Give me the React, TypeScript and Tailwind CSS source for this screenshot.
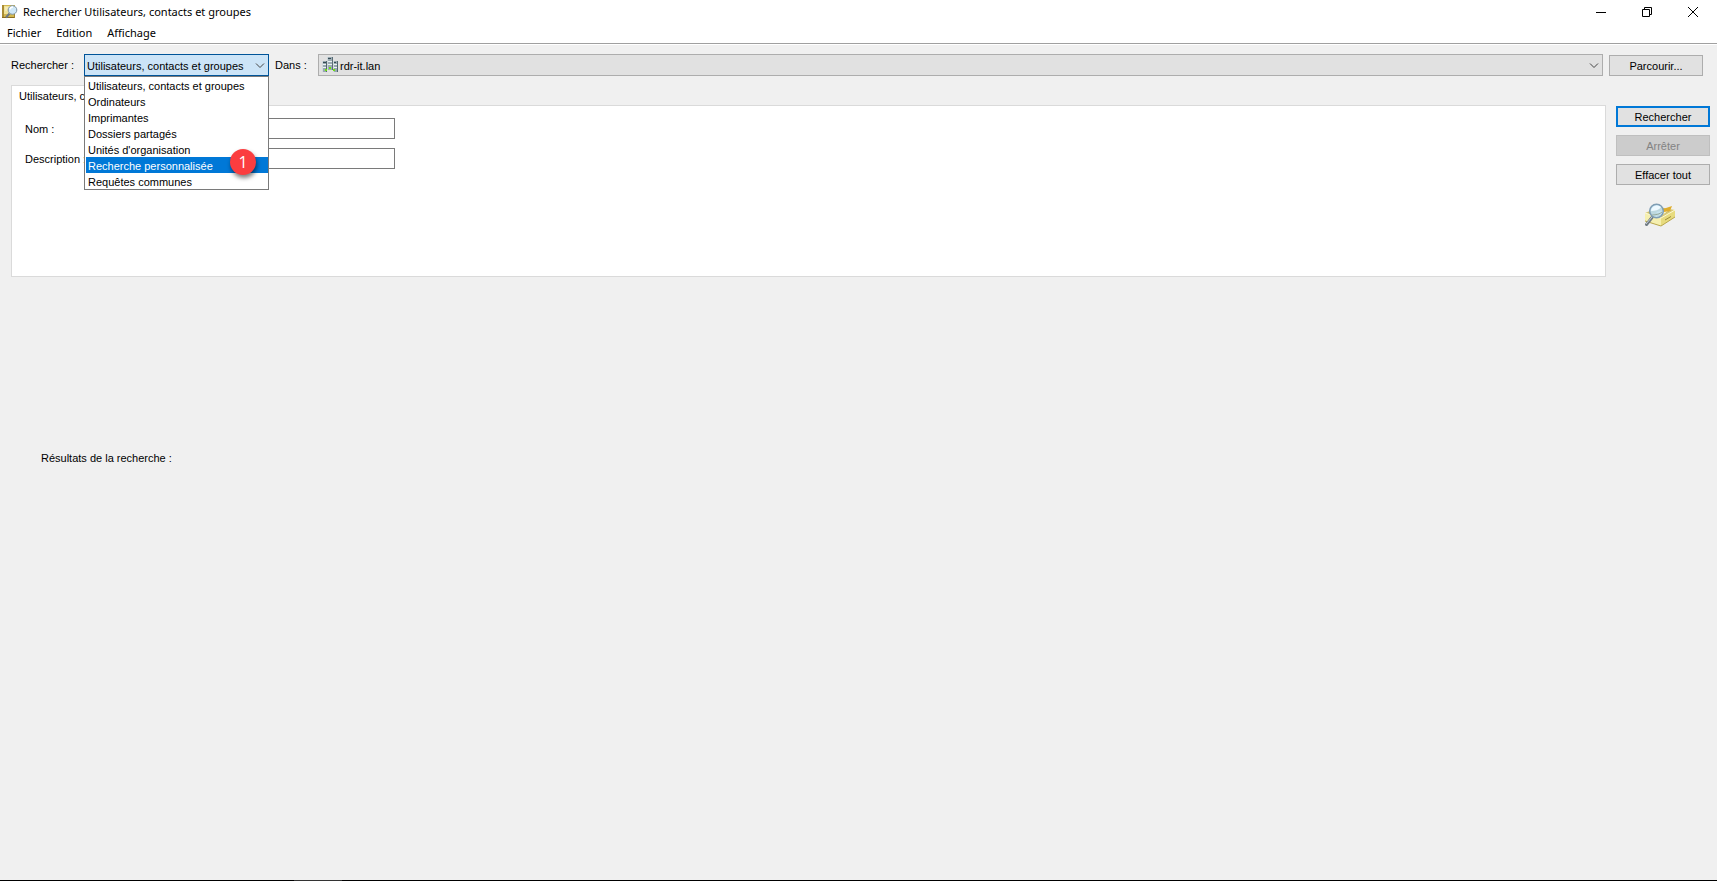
import { useState } from "react";

const MENUS = ["Fichier", "Edition", "Affichage"];

const SEARCH_TYPES = [
  "Utilisateurs, contacts et groupes",
  "Ordinateurs",
  "Imprimantes",
  "Dossiers partagés",
  "Unités d'organisation",
  "Recherche personnalisée",
  "Requêtes communes",
];

function AppIcon() {
  return (
    <svg width="16" height="16" viewBox="0 0 16 16" aria-hidden="true">
      <path d="M0 1h13v13H0z" fill="#d3b84f" />
      <path d="M0 1h2v13H0z" fill="#a98c35" />
      <path d="M2 2h10v8H2z" fill="#efe197" />
      <path d="M0 13h13v1H0z" fill="#8a6c20" />
      <path d="M12 10h1v4h-1z" fill="#a08434" />
      <path d="M3 4h4M3 6h2" stroke="#fbf6cf" />
      <path d="M7.500 9.500 4 13.500" stroke="#6f7a84" strokeWidth="2" />
      <circle cx="10.500" cy="6" r="4.300" fill="#cfe8f8" stroke="#8095a5" />
      <path d="M8 5.500a3 3 0 0 1 3-2.500" stroke="#fff" strokeWidth="1.500" fill="none" />
    </svg>
  );
}

function DomainIcon() {
  return (
    <svg width="16" height="16" viewBox="0 0 16 16" aria-hidden="true">
      <path d="M5 0h6v13H5z" fill="#9babb3" />
      <path d="M5 0h1v13H5z" fill="#cbd6da" />
      <path d="M10 0h1v13h-1z" fill="#5c6e77" />
      <path d="M6 4.500h4M6 7.500h4" stroke="#e9f0f2" />
      <path d="M6 1h3v1H6z" fill="#364a54" />
      <path d="M0 4h5v11H0zM11 4h5v11h-5z" fill="#97a8b0" />
      <path d="M0 4h1v11H0zM11 4h1v11h-1z" fill="#d0dade" />
      <path d="M4 4h1v11H4zM15 4h1v11h-1z" fill="#54666f" />
      <path d="M1 7.500h3M1 10.500h3M12 7.500h3M12 10.500h3" stroke="#edf3f5" />
      <path d="M1 5h3v1H1zM12 5h2v1h-2z" fill="#364a54" />
      <path d="M3 12h2v2H3zM7 10h2v2H7zM11 12h2v2h-2z" fill="#6fe00f" />
    </svg>
  );
}

function SearchBoxIcon() {
  return (
    <svg width="32" height="24" viewBox="0 0 32 24" aria-hidden="true">
      <path d="m1 10 14-6 16 3-14 9z" fill="#d9ca76" />
      <path d="m4 10 12-5 11 2-11 6z" fill="#a8984a" />
      <path d="m12 9 15-3-10 7z" fill="#fbf6cf" />
      <path d="m19 6 9-3-2 5-6 1z" fill="#e0ad2c" />
      <path d="m1 10 16 5v8L1 18z" fill="#f5efb0" />
      <path d="m17 15 14-8v7l-14 9z" fill="#e7db7e" />
      <path d="m1 18 16 5 14-9" stroke="#b9a74b" fill="none" />
      <path d="m1 10 16 5 14-8" stroke="#fdf9d4" fill="none" />
      <path d="m21 17 6-3.500" stroke="#9e8c37" />
      <path d="M8 14.500 2.500 21.500" stroke="#6f7a82" strokeWidth="3" strokeLinecap="round" />
      <path d="m8 14-6 7" stroke="#c8d0d5" />
      <circle cx="12.500" cy="8" r="6.800" fill="#bfe0f4" fillOpacity=".88" stroke="#7f9db3" strokeWidth="1.500" />
      <path d="M7 8a6 6 0 0 1 10-4c-2 3-6 4-10 4z" fill="#eef9ff" />
      <path d="M8 12c4 0 8-1 10-3" stroke="#96a99a" fill="none" />
    </svg>
  );
}

function Chevron() {
  return (
    <svg className="pointer-events-none absolute top-[9px] right-1" width="10" height="6" viewBox="0 0 10 6" fill="none" stroke="#444" aria-hidden="true">
      <path d="m1 .5 4 4 4-4" />
    </svg>
  );
}

function WindowControls() {
  return (
    <div className="flex">
      <button aria-label="Réduire" className="flex h-[22px] w-[46px] items-center justify-center">
        <svg width="10" height="10" viewBox="0 0 10 10" stroke="#000"><path d="M0 5.500h10" /></svg>
      </button>
      <button aria-label="Restaurer" className="flex h-[22px] w-[46px] items-center justify-center">
        <svg width="10" height="10" viewBox="0 0 10 10" fill="none" stroke="#000">
          <path d="M.5 2.500h7v7h-7zM2.500 2.500v-2h7v7h-2" />
        </svg>
      </button>
      <button aria-label="Fermer" className="flex h-[22px] w-[46px] items-center justify-center">
        <svg width="10" height="10" viewBox="0 0 10 10" stroke="#000"><path d="m0 0 10 10M10 0 0 10" /></svg>
      </button>
    </div>
  );
}

const buttonBase = "h-[21px] w-[94px] shrink-0 bg-[#e1e1e1] text-center leading-4";

export default function App() {
  const [searchType, setSearchType] = useState(SEARCH_TYPES[0]);
  const [highlighted, setHighlighted] = useState(SEARCH_TYPES[5]);

  return (
    <div className="flex min-h-screen flex-col bg-[#f0f0f0] font-['Liberation_Sans',Arial,sans-serif] text-[11px] text-black">
      <header className="border-b border-white bg-white font-['Noto_Sans','Open_Sans',sans-serif]">
        <div className="flex h-[23px] items-center justify-between pr-px">
          <div className="flex items-center gap-[5px] pl-[2px]">
            <AppIcon />
            <h1 className="pt-px text-[11px]">Rechercher Utilisateurs, contacts et groupes</h1>
          </div>
          <WindowControls />
        </div>
        <nav className="flex h-[21px] gap-[15px] border-b border-[#a0a0a0] pl-[7px]">
          {MENUS.map((menu) => (
            <button key={menu} className="text-[11px] leading-5">{menu}</button>
          ))}
        </nav>
      </header>

      <main className="flex-1">
        {/* Search scope */}
        <div className="flex h-10 items-start pt-[9px] pr-[14px] pl-[11px]">
          <label htmlFor="search-type" className="w-[73px] shrink-0 leading-[22px]">Rechercher :</label>
          <div className="relative w-[185px] shrink-0">
            <select
              id="search-type"
              value={searchType}
              onChange={(e) => setSearchType(e.target.value)}
              className="block h-[22px] w-full appearance-none border border-[#005499] bg-[#cce4f7] pt-[2px] pl-[2px] outline-none"
            >
              {SEARCH_TYPES.map((type) => (
                <option key={type}>{type}</option>
              ))}
            </select>
            <Chevron />
            <div role="listbox" aria-label="Rechercher" className="absolute top-full left-0 z-10 w-full border border-[#7a7a7a] bg-white pl-px">
              {SEARCH_TYPES.map((type) => (
                <button
                  key={type}
                  role="option"
                  aria-selected={type === highlighted}
                  onMouseEnter={() => setHighlighted(type)}
                  onClick={() => setSearchType(type)}
                  className={`block h-4 w-full pt-px pl-[2px] text-left leading-4 ${
                    type === highlighted ? "bg-[#0078d7] text-white" : ""
                  }`}
                >
                  {type}
                </button>
              ))}
              <span className="absolute top-[72px] left-[145px] flex size-[26px] items-center justify-center rounded-full bg-[#fb3d3f] font-['Open_Sans',sans-serif] text-base text-white shadow-[1px_3px_4px_rgba(0,0,0,0.5)]">
                1
              </span>
            </div>
          </div>
          <label htmlFor="search-domain" className="w-[49px] shrink-0 pl-[6px] leading-[22px]">Dans :</label>
          <div className="relative flex-1">
            <select
              id="search-domain"
              className="block h-[22px] w-full appearance-none border border-[#adadad] bg-[#e1e1e1] pt-[2px] pl-[21px]"
            >
              <option>rdr-it.lan</option>
            </select>
            <span className="pointer-events-none absolute top-[3px] left-1">
              <DomainIcon />
            </span>
            <Chevron />
          </div>
          <button className={`${buttonBase} mt-px ml-[6px] border border-[#adadad] pt-px`}>Parcourir...</button>
        </div>

        {/* Criteria */}
        <div className="flex pr-[7px] pl-[11px]">
          <div className="flex-1">
            <div role="tablist" className="flex">
              <button role="tab" aria-selected="true" className="relative -mb-px h-[21px] border border-b-0 border-[#dadada] bg-white px-[7px] leading-[18px]">
                Utilisateurs, contacts et groupes
              </button>
            </div>
            <div role="tabpanel" className="flex h-[172px] flex-col gap-[9px] border border-[#dadada] bg-white pt-3 pl-[13px]">
              <div className="flex h-[21px] items-center">
                <label htmlFor="name" className="w-[80px] pt-px">Nom :</label>
                <input id="name" type="text" className="h-[21px] w-[290px] border border-[#7a7a7a] bg-white px-1 outline-none" />
              </div>
              <div className="flex h-[21px] items-center">
                <label htmlFor="description" className="w-[80px] pt-px">Description :</label>
                <input id="description" type="text" className="h-[21px] w-[290px] border border-[#7a7a7a] bg-white px-1 outline-none" />
              </div>
            </div>
          </div>
          <div className="ml-[10px] flex flex-col gap-2 pt-[21px]">
            <button className={`${buttonBase} border-2 border-[#0078d7]`}>Rechercher</button>
            <button disabled className="h-[21px] w-[94px] border border-[#bfbfbf] bg-[#cccccc] text-center leading-4 text-[#838383]">
              Arrêter
            </button>
            <button className={`${buttonBase} border border-[#adadad]`}>Effacer tout</button>
            <div className="mt-[10px] pl-[28px]">
              <SearchBoxIcon />
            </div>
          </div>
        </div>

        <p className="pt-[173px] pl-[41px] leading-4">Résultats de la recherche :</p>
      </main>

      <footer className="h-px bg-black pl-[294px]">
        <div className="h-px w-12 bg-[#333333]" />
      </footer>
    </div>
  );
}
